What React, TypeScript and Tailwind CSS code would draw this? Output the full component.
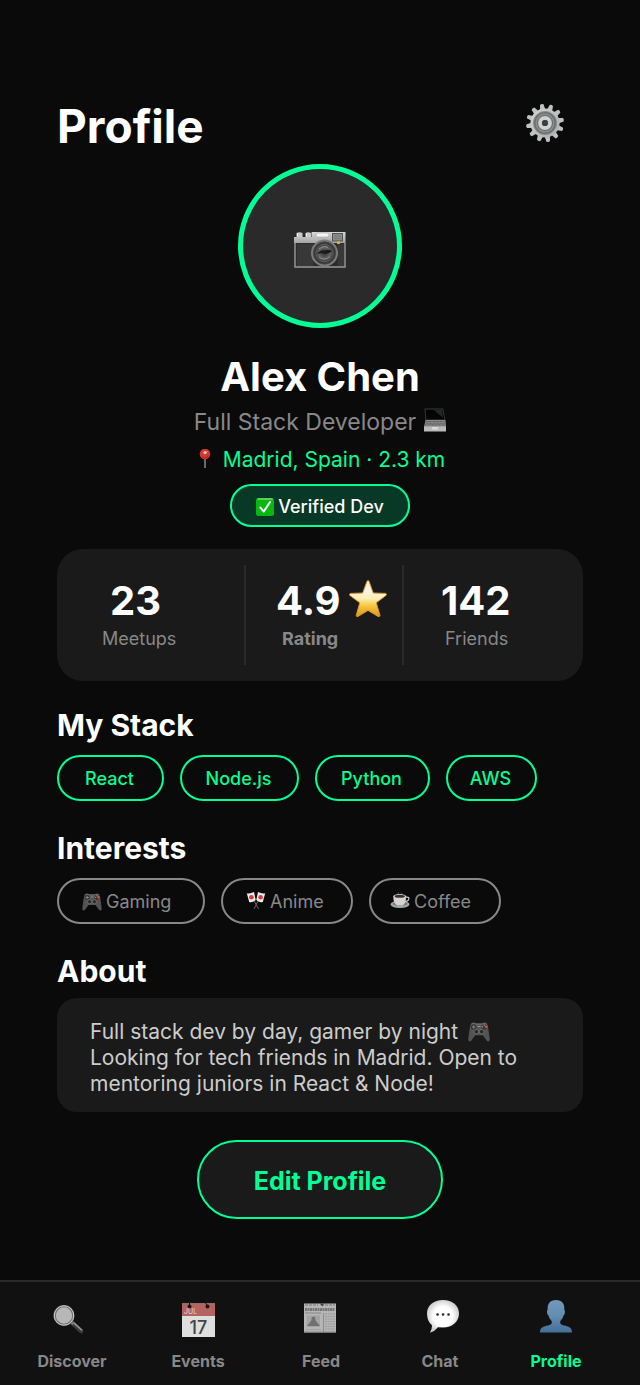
import type { ReactNode } from "react";

function GearIcon() {
  return (
    <svg viewBox="0 0 40 40" className="size-10" aria-hidden="true">
      <defs>
        <linearGradient id="gear" x1="0" y1="0" x2="1" y2="1">
          <stop offset="0" stopColor="#d4d6d6" />
          <stop offset="1" stopColor="#a9abab" />
        </linearGradient>
      </defs>
      {[20, 50, 80, 110, 140, 170, 200, 230, 260, 290, 320, 350].map((a) => (
        <path key={a} d="M17.3 7 18.2 1.4Q20 .3 21.8 1.4L22.7 7Z" fill="#bfc1c1" transform={`rotate(${a} 20 20)`} />
      ))}
      <circle cx="20" cy="20" r="14.6" fill="url(#gear)" />
      <circle cx="20" cy="20" r="11.6" fill="#6d7070" />
      <circle cx="20" cy="20" r="11.6" fill="none" stroke="#8c9090" strokeWidth="1" />
      <circle cx="20" cy="20" r="8.8" fill="none" stroke="#8f9292" strokeWidth="1.2" />
      <circle cx="20" cy="20" r="5" fill="#4d4f50" stroke="#cfd1d1" strokeWidth="3.8" />
      <circle cx="20" cy="20" r="2.9" fill="#3c3f40" />
    </svg>
  );
}

function CameraIcon() {
  return (
    <svg viewBox="0 0 52 38" className="h-[38px] w-[52px]" aria-hidden="true">
      <defs>
        <linearGradient id="camTop" x1="0" y1="0" x2="0" y2="1">
          <stop offset="0" stopColor="#d6d6d6" />
          <stop offset="1" stopColor="#a5a5a5" />
        </linearGradient>
        <radialGradient id="lens">
          <stop offset="0" stopColor="#333" />
          <stop offset=".7" stopColor="#666" />
          <stop offset="1" stopColor="#333" />
        </radialGradient>
      </defs>
      <path d="M2.5 2Q5.5 .5 8.5 2V6H2.5ZM11.5 2Q14 .5 17 2V6h-5.5Z" fill="#c9c9c9" />
      <path d="M3.5 2.3v3M12.5 2.3v3" stroke="#f4f4f4" />
      <path d="M0 6H17.5V1.5Q17.5 1 18 1H51.5V12H0Z" fill="url(#camTop)" />
      <path d="M0 12H52V37H0Z" fill="#2c2c2c" />
      <path d="M1 12V36H51V12" fill="none" stroke="#999" strokeWidth="1.4" />
      <path d="M3 13H19V35H3ZM44 13h6v22h-6z" fill="#383838" />
      <rect x="22" y="2" width="13" height="4" rx="2" fill="#f4f4f4" stroke="#999" strokeWidth=".5" />
      <rect x="38.5" y="2.5" width="10" height="7.5" fill="#878b8c" stroke="#555" />
      <path d="M40 5h7M40 7.5h7" stroke="#6b7172" strokeWidth=".6" />
      <circle cx="30.5" cy="22" r="13.5" fill="#7c7c7c" />
      <circle cx="30.5" cy="22" r="11.2" fill="#393939" stroke="#484848" strokeWidth=".8" />
      <circle cx="30.5" cy="22" r="8.7" fill="url(#lens)" stroke="#6a6a6a" strokeWidth=".8" />
      <path d="M23 23Q26 18.5 31 19.5 34 18 38 20 34 24 29 22.5 26 22 23 23Z" fill="#1c1c1c" />
      <path d="M25 26q5.5 4.5 11-.5M25 18q5-4 9-1.5" fill="none" stroke="#999" strokeWidth=".8" />
      <rect x="43" y="10.5" width="3" height="2.4" rx=".7" fill="#f4b52c" />
    </svg>
  );
}

function LaptopIcon() {
  return (
    <svg viewBox="0 2 22 24" className="h-6 w-[22px] overflow-visible" aria-hidden="true">
      <path d="M.5 .5H19.2L21.5 12.5H1.5Z" fill="#3b3b3b" />
      <path d="M1.5 1.5H18.3L20.5 11.5H2.3Z" fill="#030405" />
      <path d="m10 2 9 8-1-8Z" fill="#252525" />
      <path d="M1.5 12H21.5L22 19H0Z" fill="#8e8e8e" />
      <path d="M2 13.5H20.7M1.7 15.2H21M1 16.9H21.2" stroke="#555" strokeWidth="1" strokeDasharray="1 .4" />
      <path d="M0 18.5H22V23.5H0Z" fill="#bababa" />
      <path d="M8 19h6v2.5H8z" fill="#dadada" />
    </svg>
  );
}

function PinIcon() {
  return (
    <svg viewBox="0 2 22 22" className="size-[22px]" aria-hidden="true">
      <path d="M10 9V21" stroke="#89898d" strokeWidth="1.5" />
      <circle cx="10" cy="7" r="5.3" fill="#cf3a33" />
      <path d="M6 8q3 5 8-.5-1 4.3-4 4.3T6 8Z" fill="#b92725" />
      <circle cx="10" cy="5.6" r="1.6" fill="#ffc49b" />
      <path d="m11 5.6 1-1" stroke="#fff" />
    </svg>
  );
}

function CheckIcon() {
  return (
    <svg viewBox="0 0 18 18" className="size-[18px]" aria-hidden="true">
      <rect width="18" height="18" rx="2.5" fill="#08b80f" />
      <path d="M2 1H16" stroke="#70d96b" strokeWidth="1.5" strokeLinecap="round" />
      <path d="M4.4 9.6 7.8 13.5 14 4" fill="none" stroke="#fff" strokeWidth="2" strokeLinecap="round" strokeLinejoin="round" />
    </svg>
  );
}

function StarIcon() {
  return (
    <svg viewBox="0 3 40 38" className="h-[38px] w-10 overflow-visible" aria-hidden="true">
      <defs>
        <linearGradient id="star" x1="0" y1="0" x2="0" y2="1">
          <stop offset="0" stopColor="#fff3cf" />
          <stop offset=".3" stopColor="#f7f3e6" />
          <stop offset=".5" stopColor="#fdeeb0" />
          <stop offset=".68" stopColor="#f7cb48" />
          <stop offset="1" stopColor="#dc9218" />
        </linearGradient>
      </defs>
      <path
        d="M18 2.2Q19 1 20 2.2L24.2 14 36.7 14.4Q38.3 15 37 16.4L27.3 23.8 31 36.5Q30.7 38.2 29 37.4L19 31.4 9 37.4Q7.2 38 7.2 36.5L10.8 23.8 .8 16.4Q-.2 14.8 1.5 14.4L13.7 14Z"
        fill="url(#star)"
        stroke="#dc942c"
        strokeWidth="1"
      />
    </svg>
  );
}

function GamepadIcon({ className }: { className: string }) {
  return (
    <svg viewBox="0 0 22 20" className={className} aria-hidden="true">
      <path d="M3 1.5Q5-.2 8 1.3H14Q17-.2 19 1.5 20.3 4 21.8 18 21 20.2 19 19L14.8 13.3H7.2L3 19Q1 20.2.2 18 1.7 4 3 1.5Z" fill="#535355" />
      <path d="M3.5 2.3Q5.5.8 8 2.2H14Q16.5.8 18.5 2.3" fill="none" stroke="#7b7b7d" strokeWidth=".8" />
      <circle cx="5.7" cy="5" r="2.7" fill="#333" />
      <path d="M5.7 3.3v3.4M4 5h3.4" stroke="#888" />
      <circle cx="16.3" cy="4.8" r="2.8" fill="#343434" />
      <circle cx="16.3" cy="2.9" r="1" fill="#777" />
      <circle cx="18.2" cy="4.8" r="1.4" fill="#ef4935" />
      <circle cx="14.5" cy="4.8" r=".8" fill="#999" />
      <circle cx="8.3" cy="9.7" r="2.3" fill="#292929" stroke="#808080" strokeWidth=".7" />
      <circle cx="13.7" cy="9.7" r="2.3" fill="#292929" stroke="#808080" strokeWidth=".7" />
      <path d="M9.5 4.5h3" stroke="#aaa" strokeWidth=".8" />
    </svg>
  );
}

function FlagsIcon() {
  return (
    <svg viewBox="0 2 20 20" className="size-5" aria-hidden="true">
      <path d="M6 7 12.6 19M14 7 8 19" stroke="#6a6762" strokeWidth="1" />
      <path d="M.8 3.2Q4 4 8 2L9.7 10Q6 13 3.2 12ZM19.2 3.2Q16 4 12 2L10.3 10Q14 13 16.8 12Z" fill="#eee" />
      <circle cx="5.4" cy="7.3" r="2.3" fill="#d83b38" />
      <circle cx="14.6" cy="7.3" r="2.3" fill="#d83b38" />
    </svg>
  );
}

function CoffeeIcon() {
  return (
    <svg viewBox="0 1 20 20" className="size-5" aria-hidden="true">
      <path d="M9 3.5Q7 2.3 9 1M11 3.5Q12.5 2.5 11 1.5" fill="none" stroke="#5a5a5a" strokeWidth=".8" />
      <ellipse cx="10" cy="13.3" rx="9.5" ry="3.7" fill="#a9a9a9" />
      <ellipse cx="10" cy="12.7" rx="7.5" ry="2.2" fill="#777" />
      <path d="M3.3 5H16Q16.2 13 12.5 14.5H7.3Q3.3 13 3.3 5Z" fill="#d4d4d4" />
      <path d="M15.8 6.2Q20 5.6 18.5 8.8 17.4 10.5 14.8 10.5" fill="none" stroke="#cfcfcf" strokeWidth="1.2" />
      <ellipse cx="9.7" cy="5.2" rx="6.4" ry="2.2" fill="#dedede" />
      <ellipse cx="9.7" cy="5.3" rx="5.2" ry="1.5" fill="#3d2d28" />
    </svg>
  );
}

function SearchIcon() {
  return (
    <svg viewBox="3 0 38 38" className="size-[38px]" aria-hidden="true">
      <path d="m22.5 23 8.7 8.2" stroke="#393939" strokeWidth="4.5" strokeLinecap="round" />
      <path d="m23.7 22.8 8 7.2" stroke="#969696" strokeWidth="1.6" strokeLinecap="round" />
      <path d="m20.5 21.5 3 2.6" stroke="#777" strokeWidth="3" />
      <circle cx="14" cy="15.5" r="9.4" fill="#b7b7b7" stroke="#696c6d" strokeWidth="2.4" />
      <circle cx="14" cy="15.5" r="9.7" fill="none" stroke="#d0d1d1" strokeWidth="1" />
    </svg>
  );
}

function CalendarIcon() {
  return (
    <svg viewBox="0 0 38 38" className="size-[38px]" aria-hidden="true">
      <path d="M3 3.5H36V37H3Z" fill="#dedede" />
      <path d="M3 3.5H36V16H3Z" fill="#b46360" />
      <circle cx="10.5" cy="6.5" r="2" fill="#171111" />
      <circle cx="28.5" cy="6.5" r="2" fill="#171111" />
      <path d="M10.5 3v3M28.5 6l-2-3" stroke="#171111" />
      <text x="5" y="14" fill="#e0d6d6" fontFamily="Inter, sans-serif" fontSize="7" fontWeight="400">JUL</text>
      <text x="19.5" y="34" textAnchor="middle" fill="#444" fontFamily="Inter, sans-serif" fontSize="18" fontWeight="500">17</text>
    </svg>
  );
}

function NewspaperIcon() {
  return (
    <svg viewBox="1 0 38 38" className="size-[38px]" aria-hidden="true">
      <path d="M3 3.5H35V33H3Z" fill="#b6b6b6" />
      <path d="M4 5H17M20 5H34" stroke="#8b8b8b" strokeWidth="1.4" strokeDasharray="3 1" />
      <path d="M4 9.5H34" stroke="#777" strokeWidth="3" strokeDasharray="2 .5" />
      <path d="m18.5 3.5 3 3 1.5-3" fill="#444" />
      <path d="M4 13H20" stroke="#858585" />
      <path d="M5.5 15.5H19V27H5.5Z" fill="#a4a4a4" />
      <path d="m6 26 4-5 1-4 3-.5.5 4L19 26Z" fill="#707070" />
      <path d="M22.5 13V32" stroke="#808080" strokeWidth=".8" />
      <path d="M24 14H34M24 16.5H34M24 19H34M24 21.5H34M24 24H34M24 26.5H34M24 29H34M5 29.5H20" stroke="#9a9a9a" strokeDasharray="2 .6" />
      <path d="M3 32.3H35" stroke="#777" strokeWidth="1.4" />
    </svg>
  );
}

function ChatIcon() {
  return (
    <svg viewBox="0 0 38 38" className="size-[38px]" aria-hidden="true">
      <defs>
        <radialGradient id="chat">
          <stop offset=".6" stopColor="#fff" />
          <stop offset="1" stopColor="#d0d0d0" />
        </radialGradient>
      </defs>
      <path d="M22 0C31.5 0 38 5.5 38 13.5S31.5 27.5 22 27.5L17 27.2Q13.5 31.5 9 32.7 11 29.5 11 25.2 6 21.5 6 13.5C6 5.5 12.5 0 22 0Z" fill="url(#chat)" />
      <path d="M16.5 14.5h.1M22 14.5h.1M27.5 14.5h.1" stroke="#292929" strokeWidth="2.6" strokeLinecap="round" />
    </svg>
  );
}

function PersonIcon() {
  return (
    <svg viewBox="0 0 38 38" className="size-[38px]" aria-hidden="true">
      <defs>
        <linearGradient id="person" x1="0" y1="0" x2="0" y2="1">
          <stop offset="0" stopColor="#7199bd" />
          <stop offset=".5" stopColor="#638caf" />
          <stop offset="1" stopColor="#446f98" />
        </linearGradient>
      </defs>
      <path d="M19 0C25 0 28 4 27.3 10 28.5 10 28 15 26.5 15.5 26 18.5 24 20 23.2 21.5 23 24.3 24.5 25 28.5 25.8 33 26.8 35 28.5 35 32.5H3C3 28.5 5 26.8 9.5 25.8 13.5 25 15 24.3 14.8 21.5 14 20 12 18.5 11.5 15.5 10 15 9.5 10 10.7 10 10 4 13 0 19 0Z" fill="url(#person)" />
    </svg>
  );
}

const stats: { value: string; label: string; icon?: ReactNode; cell: string; valueClass: string; labelClass: string }[] = [
  { value: "23", label: "Meetups", cell: "", valueClass: "pl-[53px]", labelClass: "pl-[45px]" },
  { value: "4.9", label: "Rating", icon: <StarIcon />, cell: "border-l-2 border-[#2a2a2a]", valueClass: "pl-[30px]", labelClass: "pl-9 font-bold" },
  { value: "142", label: "Friends", cell: "border-l-2 border-[#2a2a2a]", valueClass: "pl-[37px]", labelClass: "pl-[41px]" },
];

const stack = [
  { name: "React", width: "w-[107px]" },
  { name: "Node.js", width: "w-[119px]" },
  { name: "Python", width: "w-[115px]" },
  { name: "AWS", width: "w-[91px]" },
];

const interests = [
  { name: "Gaming", icon: <GamepadIcon className="h-[18px] w-5" />, width: "w-[148px] pl-[23px]" },
  { name: "Anime", icon: <FlagsIcon />, width: "w-[132px] pl-[23px]" },
  { name: "Coffee", icon: <CoffeeIcon />, width: "w-[132px] pl-[19px]" },
];

const tabs = [
  { name: "Discover", icon: <SearchIcon />, active: false },
  { name: "Events", icon: <CalendarIcon />, active: false },
  { name: "Feed", icon: <NewspaperIcon />, active: false },
  { name: "Chat", icon: <ChatIcon />, active: false },
  { name: "Profile", icon: <PersonIcon />, active: true },
];

function SectionTitle({ children }: { children: ReactNode }) {
  return <h3 className="text-[30px] leading-9 font-bold">{children}</h3>;
}

export default function App() {
  return (
    <div className="flex min-h-screen flex-col bg-[#0a0a0a] font-['Inter',sans-serif] text-white">
      <main className="flex flex-col px-[57px] pt-[98px]">
        <header className="flex items-start justify-between">
          <h1 className="text-[46px] leading-14 font-bold">Profile</h1>
          <button type="button" aria-label="Settings" className="mt-[5px] mr-[18px]">
            <GearIcon />
          </button>
        </header>

        <section className="mt-[10px] flex flex-col items-center">
          <div className="flex size-[164px] items-center justify-center rounded-full border-5 border-[#00ff94] bg-[#2a2a2a] pt-2">
            <CameraIcon />
          </div>
          <h2 className="mt-[25px] text-[40px] leading-12 font-bold">Alex Chen</h2>
          <p className="mt-[5px] flex h-8 items-center gap-2 text-[23px] text-[#888]">
            Full Stack Developer
            <LaptopIcon />
          </p>
          <p className="mt-1.5 flex h-8 items-center gap-1.5 text-[21px] text-[#00ff94]">
            <PinIcon />
            Madrid, Spain · 2.3 km
          </p>
          <div className="mt-2 flex h-[43px] items-center gap-1 rounded-full border-2 border-[#00ff94] bg-[#083826] px-6 pt-0.5 text-lg font-medium">
            <CheckIcon />
            Verified Dev
          </div>
        </section>

        <section className="mt-[22px] grid grid-cols-[187fr_158fr_181fr] rounded-[26px] bg-[#1a1a1a] py-4">
          {stats.map((s) => (
            <div key={s.label} className={`h-[100px] pt-3 ${s.cell}`}>
              <div className={`flex h-12 items-center gap-2 text-[40px] font-bold ${s.valueClass}`}>
                {s.value}
                {s.icon}
              </div>
              <div className={`mt-0.5 text-lg leading-6 text-[#888] ${s.labelClass}`}>{s.label}</div>
            </div>
          ))}
        </section>

        <section className="mt-[26px]">
          <SectionTitle>My Stack</SectionTitle>
          <ul className="mt-3 flex flex-wrap gap-4">
            {stack.map((t) => (
              <li key={t.name} className={`flex h-[46px] items-center justify-center rounded-full border-2 border-[#00ff94] pt-0.5 pr-0.5 text-lg font-medium text-[#00ff94] ${t.width}`}>
                {t.name}
              </li>
            ))}
          </ul>
        </section>

        <section className="mt-[29px]">
          <SectionTitle>Interests</SectionTitle>
          <ul className="mt-3 flex flex-wrap gap-4">
            {interests.map((t) => (
              <li key={t.name} className={`flex h-[46px] items-center gap-1 rounded-full border-2 border-[#888] pt-0.5 text-lg text-[#888] ${t.width}`}>
                {t.icon}
                {t.name}
              </li>
            ))}
          </ul>
        </section>

        <section className="mt-[29px]">
          <SectionTitle>About</SectionTitle>
          <p className="mt-[9px] rounded-[20px] bg-[#1a1a1a] px-[33px] pt-[21px] pb-[15px] text-[21px] leading-[26px] text-[#ccc]">
            Full stack dev by day, gamer by night <GamepadIcon className="ml-1 inline h-5 w-[22px] align-[-3px]" />
            <br />
            Looking for tech friends in Madrid. Open to mentoring juniors in React &amp; Node!
          </p>
        </section>

        <button type="button" className="mt-7 mb-[60px] h-[79px] self-center rounded-full border-2 border-[#00ff94] bg-[#1a1a1a] px-[55px] pt-1 text-[25px] font-bold text-[#00ff94]">
          Edit Profile
        </button>
      </main>

      <nav className="mt-auto grid grid-cols-[126fr_126fr_120fr_118fr_114fr] border-t-2 border-[#2a2a2a] bg-[#111] pt-[18px] pr-[27px] pb-[14px] pl-[9px]">
        {tabs.map((t) => (
          <a
            key={t.name}
            href={`#${t.name.toLowerCase()}`}
            aria-current={t.active ? "page" : undefined}
            className={`flex flex-col items-center gap-[13px] text-base leading-5 font-bold ${t.active ? "text-[#00ff94]" : "text-[#888]"}`}
          >
            {t.icon}
            {t.name}
          </a>
        ))}
      </nav>
    </div>
  );
}
